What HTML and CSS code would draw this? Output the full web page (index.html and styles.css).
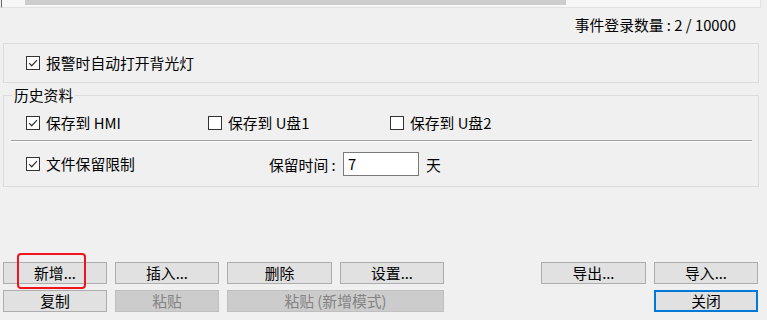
FILE: index.html
```html
<!DOCTYPE html>
<html lang="zh-CN">
<head>
<meta charset="utf-8">
<title>事件登录</title>
<link rel="stylesheet" href="styles.css">
</head>
<body>
<div class="page">
  <div class="hscroll"><div class="thumb"></div></div>
  <div class="count">事件登录数量 : 2 / 10000</div>

  <div class="group">
    <label class="check"><span class="box on"><svg viewBox="0 0 13 13"><path d="M2.3 6.6 L5.1 9.5 L10.8 3.4" fill="none" stroke="#333" stroke-width="1.3"/></svg></span>报警时自动打开背光灯</label>
  </div>

  <fieldset class="history">
    <legend>历史资料</legend>
    <div class="row row1">
      <label class="check w182"><span class="box on"><svg viewBox="0 0 13 13"><path d="M2.3 6.6 L5.1 9.5 L10.8 3.4" fill="none" stroke="#333" stroke-width="1.3"/></svg></span>保存到 HMI</label>
      <label class="check w182"><span class="box"></span>保存到 U盘1</label>
      <label class="check"><span class="box"></span>保存到 U盘2</label>
    </div>
    <div class="sep"></div>
    <div class="row row2">
      <label class="check w243"><span class="box on"><svg viewBox="0 0 13 13"><path d="M2.3 6.6 L5.1 9.5 L10.8 3.4" fill="none" stroke="#333" stroke-width="1.3"/></svg></span>文件保留限制</label>
      <span class="lbl">保留时间 :</span>
      <span class="input">7</span>
      <span class="unit">天</span>
    </div>
  </fieldset>

  <div class="buttons">
    <button class="btn c1 r1">新增...</button>
    <button class="btn c2 r1">插入...</button>
    <button class="btn c3 r1">删除</button>
    <button class="btn c4 r1">设置...</button>
    <button class="btn c6 r1">导出...</button>
    <button class="btn c7 r1">导入...</button>
    <button class="btn c1 r2">复制</button>
    <button class="btn c2 r2 disabled">粘贴</button>
    <button class="btn c3span r2 disabled">粘贴 (新增模式)</button>
    <button class="btn c7 r2 default">关闭</button>
  </div>
  <div class="highlight"></div>
</div>
</body>
</html>
```

FILE: styles.css
```css
* { box-sizing: border-box; }
html, body {
  margin: 0;
  padding: 0;
  background: #f0f0f0;
}
body {
  width: 767px;
  height: 320px;
  overflow: hidden;
  font-family: "Noto Sans CJK SC", "Microsoft YaHei", sans-serif;
  font-size: 14.8px;
  color: #000;
}
.page {
  position: relative;
  width: 767px;
  height: 320px;
}
.hscroll {
  height: 8px;
  margin: 0 6px 0 1px;
  border-left: 1px solid #6a6a6a;
  border-right: 1px solid #e2e2e2;
  border-bottom: 1px solid #e2e2e2;
  background: #f7f7f7;
}
.thumb {
  margin-left: 23px;
  width: 541px;
  height: 5px;
  background: #cdcdcd;
}
.count {
  height: 35px;
  padding-top: 7px;
  line-height: 20px;
  text-align: right;
  padding-right: 31px;
}
.group {
  height: 40px;
  margin: 0 8px 0 3px;
  border: 1px solid #dcdcdc;
  padding-left: 22px;
  display: flex;
  align-items: center;
}
.check {
  display: flex;
  align-items: center;
  white-space: nowrap;
  line-height: 18px;
}
.box {
  width: 14px;
  height: 14px;
  border: 1px solid #333;
  background: #fff;
  margin-right: 6px;
  flex: none;
  display: block;
}
.box svg { display: block; width: 12px; height: 12px; }
.w182 { width: 182px; }
.w243 { width: 243px; }

.history {
  margin: 4px 8px 0 3px;
  padding: 0;
  border: 1px solid #dcdcdc;
  min-width: 0;
}
.history legend {
  margin-left: 8px;
  padding: 0 2px;
  line-height: 16px;
}
.row {
  display: flex;
  align-items: center;
  padding-left: 22px;
}
.row1 { height: 37px; padding-top: 2px; }
.sep {
  margin: 0 6px 0 7px;
  border-top: 1px solid #a0a0a0;
  border-bottom: 1px solid #fcfcfc;
}
.row2 { height: 44px; }
.lbl { white-space: nowrap; width: 74px; }
.input {
  width: 76px;
  height: 24px;
  border: 1px solid #7a7a7a;
  background: #fff;
  line-height: 22px;
  padding-left: 4px;
}
.unit { margin-left: 7px; }

.buttons {
  margin-top: 75px;
  padding: 0 9px 0 3px;
  display: grid;
  grid-template-columns: 104px 104px 105px 104px 1fr 105px 104px;
  grid-template-rows: 22px 22px;
  column-gap: 8px;
  row-gap: 6px;
}
.btn {
  font: inherit;
  color: #000;
  background: #e1e1e1;
  border: 1px solid #adadad;
  padding: 0;
  margin: 0;
  line-height: 20px;
  height: 22px;
  text-align: center;
}
.r1 { grid-row: 1; }
.r2 { grid-row: 2; }
.c1 { grid-column: 1; }
.c2 { grid-column: 2; }
.c3 { grid-column: 3; }
.c4 { grid-column: 4; }
.c6 { grid-column: 6; }
.c7 { grid-column: 7; }
.c3span { grid-column: 3 / span 2; }
.disabled {
  background: #cccccc;
  border-color: #bfbfbf;
  color: #838383;
}
.default {
  border: 2px solid #0078d7;
  line-height: 18px;
}
.highlight {
  position: absolute;
  left: 17px;
  top: 253px;
  width: 69px;
  height: 36px;
  border: 2px solid #f0141e;
  border-radius: 4px;
}
```
